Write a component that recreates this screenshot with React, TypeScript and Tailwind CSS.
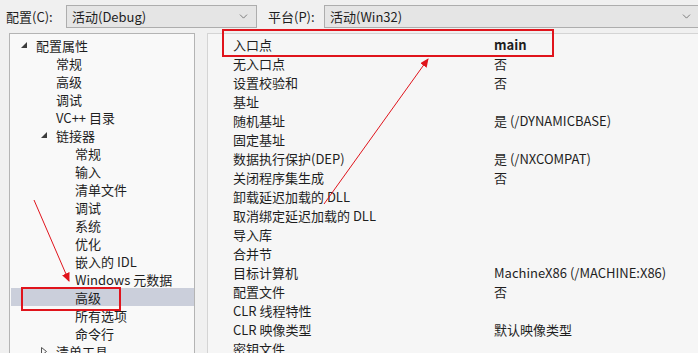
import { ChevronDown } from "lucide-react";

const tree: { label: string; level: number; open?: boolean; closed?: boolean; selected?: boolean }[] = [
  { label: "配置属性", level: 0, open: true },
  { label: "常规", level: 1 },
  { label: "高级", level: 1 },
  { label: "调试", level: 1 },
  { label: "VC++ 目录", level: 1 },
  { label: "链接器", level: 1, open: true },
  { label: "常规", level: 2 },
  { label: "输入", level: 2 },
  { label: "清单文件", level: 2 },
  { label: "调试", level: 2 },
  { label: "系统", level: 2 },
  { label: "优化", level: 2 },
  { label: "嵌入的 IDL", level: 2 },
  { label: "Windows 元数据", level: 2 },
  { label: "高级", level: 2, selected: true },
  { label: "所有选项", level: 2 },
  { label: "命令行", level: 2 },
  { label: "清单工具", level: 1, closed: true },
];

const props: [string, string][] = [
  ["入口点", "main"],
  ["无入口点", "否"],
  ["设置校验和", "否"],
  ["基址", ""],
  ["随机基址", "是 (/DYNAMICBASE)"],
  ["固定基址", ""],
  ["数据执行保护(DEP)", "是 (/NXCOMPAT)"],
  ["关闭程序集生成", "否"],
  ["卸载延迟加载的 DLL", ""],
  ["取消绑定延迟加载的 DLL", ""],
  ["导入库", ""],
  ["合并节", ""],
  ["目标计算机", "MachineX86 (/MACHINE:X86)"],
  ["配置文件", "否"],
  ["CLR 线程特性", ""],
  ["CLR 映像类型", "默认映像类型"],
  ["密钥文件", ""],
];

const indent = ["pl-[10px]", "pl-[30px]", "pl-[49px]"];

const Combo = ({ text, className }: { text: string; className: string }) => (
  <div
    className={`flex items-center h-[23px] bg-[#e5e5e5] border border-[#adadad] pl-[5px] pr-[6px] ${className}`}
  >
    <span className="flex-1">{text}</span>
    <ChevronDown size={13} strokeWidth={1.2} className="text-[#444]" />
  </div>
);

const App = () => {
  return (
    <div
      className="relative w-[698px] h-[353px] overflow-hidden bg-[#f0f0f0] text-[13px] text-[#1e1e1e] leading-none"
      style={{ fontFamily: '"Noto Sans CJK SC", "Noto Sans", sans-serif' }}
    >
      <div className="flex items-center h-[31px] pt-[1px]">
        <span className="pl-[6px] w-[66px]">配置(C):</span>
        <Combo text="活动(Debug)" className="w-[191px]" />
        <span className="pl-[11px] w-[67px]">平台(P):</span>
        <Combo text="活动(Win32)" className="flex-1 -mr-[2px]" />
      </div>

      <div className="flex h-[330px] pt-[2px]">
        <div className="ml-[9px] w-[186px] border border-[#b4b4b4] bg-[#f9f9f9] pt-[2px] pl-[1px]">
          {tree.map((row, i) => (
            <div
              key={i}
              className={`flex items-center h-[18px] ${row.selected ? "bg-[#cbcfdb]" : ""} ${indent[row.level]}`}
            >
              {row.open && (
                <svg width="6" height="6" viewBox="0 0 6 6" className="mr-[9px]">
                  <polygon points="6,0 6,6 0,6" fill="#3c3c3c" />
                </svg>
              )}
              {row.closed && (
                <svg width="6" height="9" viewBox="0 0 6 9" className="mr-[9px]">
                  <polygon points="0.5,0.5 5.5,4.5 0.5,8.5" fill="none" stroke="#555" strokeWidth="1" />
                </svg>
              )}
              {!row.open && !row.closed && <span className="w-[15px]" />}
              <span>{row.label}</span>
            </div>
          ))}
        </div>

        <div className="ml-[12px] flex-1 border-l border-t border-[#d4d4d4] bg-[#f6f6f6] pt-[1px]">
          {props.map(([k, v], i) => (
            <div key={i} className="flex items-center h-[19px]">
              <span className="pl-[25px] w-[286px]">{k}</span>
              <span className={i === 0 ? "font-semibold" : ""}>{v}</span>
            </div>
          ))}
        </div>
      </div>

      {/* annotations */}
      <div className="absolute left-[222px] top-[29px] w-[332px] h-[28px] border-[2.5px] border-[#e0141c]" />
      <div className="absolute left-[21px] top-[287px] w-[100px] h-[24px] border-[2.5px] border-[#e0141c]" />
      <svg className="absolute left-0 top-0" width="698" height="353" viewBox="0 0 698 353">
        <defs>
          <marker id="ah" markerWidth="10" markerHeight="10" refX="8" refY="4" orient="auto" markerUnits="userSpaceOnUse">
            <polygon points="0,0 9,4 0,8" fill="#e0141c" />
          </marker>
        </defs>
        <line x1="34" y1="200" x2="69" y2="281" stroke="#e0141c" strokeWidth="1" markerEnd="url(#ah)" />
        <line x1="324" y1="204" x2="428" y2="59" stroke="#e0141c" strokeWidth="1" markerEnd="url(#ah)" />
      </svg>
    </div>
  );
};

export default App;
